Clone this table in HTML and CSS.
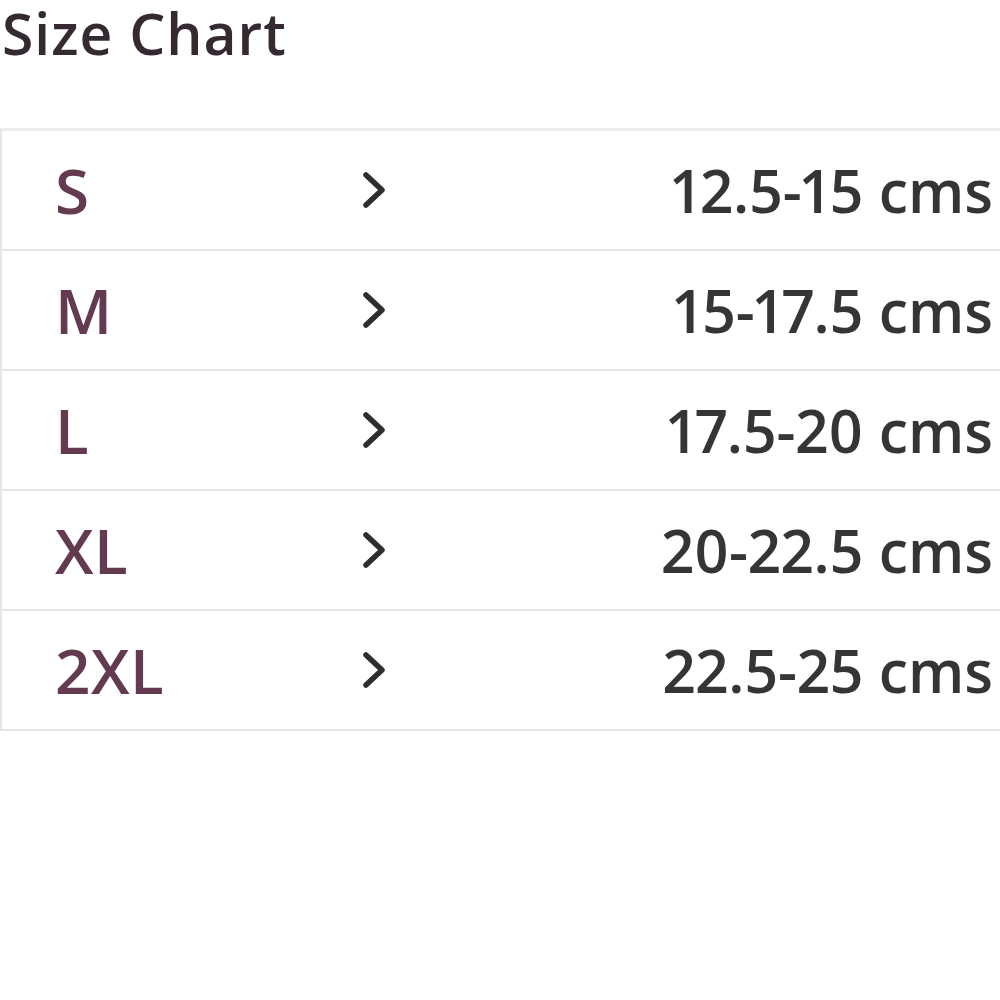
FILE: index.html
```html
<!DOCTYPE html>
<html lang="en">
<head>
<meta charset="utf-8">
<title>Size Chart</title>
<link rel="stylesheet" href="styles.css">
</head>
<body>
  <main class="page">
    <h1 class="title">Size Chart</h1>
    <div class="chart">
      <div class="row">
        <span class="size">S</span>
        <svg class="chev" viewBox="0 0 26 42"><polyline points="5,6 21,21 5,36"/></svg>
        <span class="range">12.5-15 cms</span>
      </div>
      <div class="row">
        <span class="size">M</span>
        <svg class="chev" viewBox="0 0 26 42"><polyline points="5,6 21,21 5,36"/></svg>
        <span class="range">15-17.5 cms</span>
      </div>
      <div class="row">
        <span class="size">L</span>
        <svg class="chev" viewBox="0 0 26 42"><polyline points="5,6 21,21 5,36"/></svg>
        <span class="range">17.5-20 cms</span>
      </div>
      <div class="row">
        <span class="size">XL</span>
        <svg class="chev" viewBox="0 0 26 42"><polyline points="5,6 21,21 5,36"/></svg>
        <span class="range">20-22.5 cms</span>
      </div>
      <div class="row">
        <span class="size">2XL</span>
        <svg class="chev" viewBox="0 0 26 42"><polyline points="5,6 21,21 5,36"/></svg>
        <span class="range">22.5-25 cms</span>
      </div>
    </div>
  </main>
</body>
</html>
```

FILE: styles.css
```css
html, body {
  margin: 0;
  padding: 0;
  background: #ffffff;
}

body {
  font-family: "Open Sans", "Noto Sans", sans-serif;
  color: #333333;
  width: 1000px;
  height: 1000px;
  overflow: hidden;
}

.page {
  display: flex;
  flex-direction: column;
}

.title {
  margin: 0;
  padding: 1px 0 0 2px;
  height: 128px;
  box-sizing: border-box;
  font-size: 57px;
  line-height: 64px;
  font-weight: 600;
  color: #352a32;
  letter-spacing: 1px;
}

.chart {
  border-top: 3px solid #ececec;
  border-left: 2px solid #e6e6e6;
}

.row {
  display: grid;
  grid-template-columns: 306px 26px 1fr;
  align-items: center;
  height: 118px;
  padding: 0 7px 0 53px;
  border-bottom: 2px solid #e4e4e4;
}

.size {
  font-size: 62px;
  font-weight: 600;
  color: #633a4f;
  letter-spacing: 0.5px;
}

.chev {
  width: 26px;
  height: 42px;
}

.chev polyline {
  fill: none;
  stroke: #2e2e2e;
  stroke-width: 5.5;
  stroke-linecap: round;
  stroke-linejoin: round;
}

.range {
  justify-self: end;
  font-size: 59px;
  font-weight: 600;
  color: #353535;
  font-variant-numeric: proportional-nums;
}
```
